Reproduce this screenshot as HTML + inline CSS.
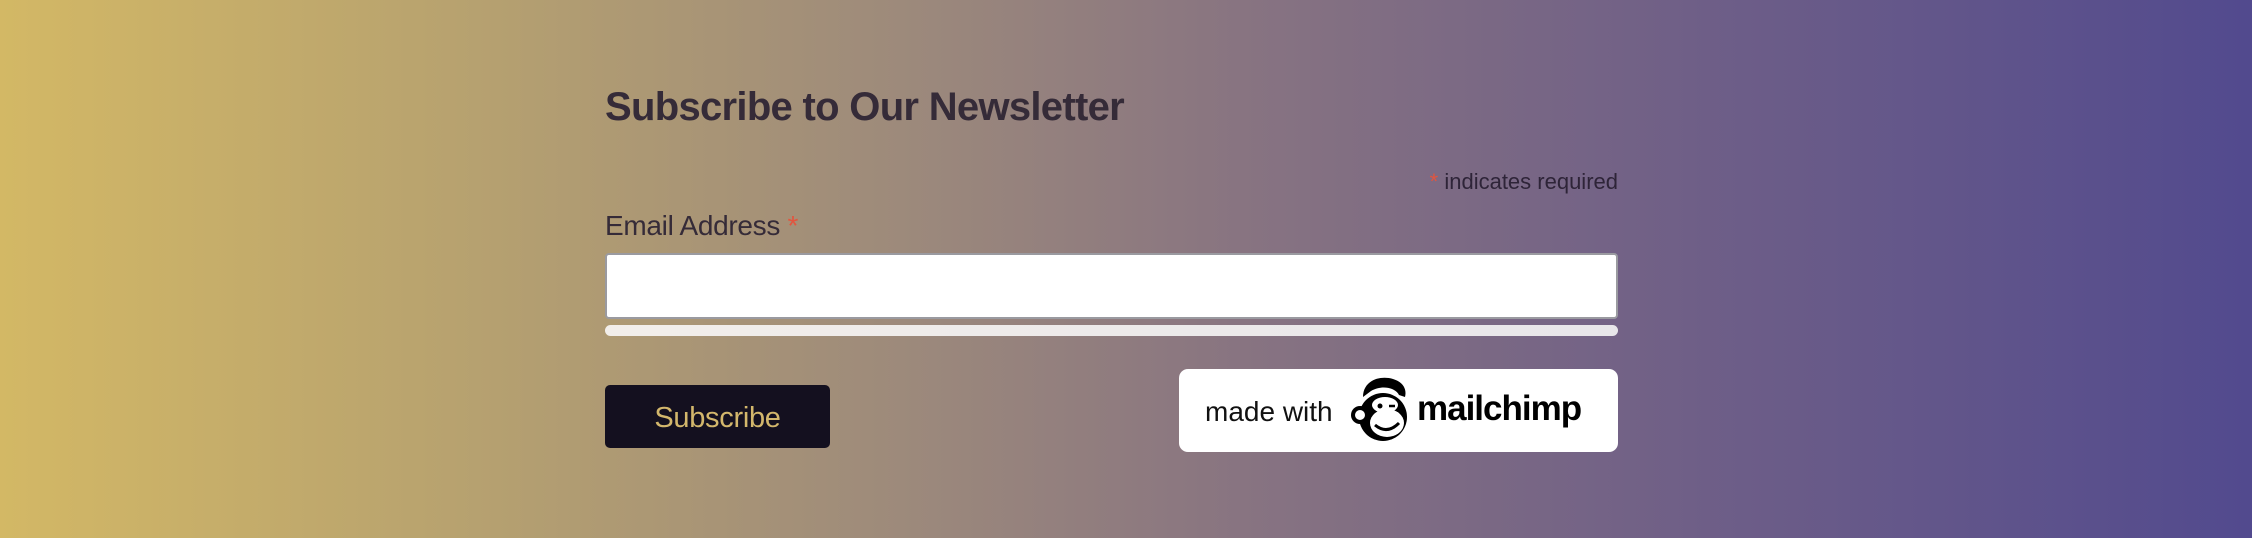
<!DOCTYPE html>
<html><head><meta charset="utf-8"><style>
html,body{margin:0;padding:0}
body{width:2252px;height:538px;overflow:hidden;position:relative;font-family:"Liberation Sans",Arial,sans-serif;
background:linear-gradient(to right,#d3b865 0%,#b5a070 22%,#9d8a7b 40%,#887481 55%,#6f5f87 75%,#524a8e 100%);}
.h{position:absolute;left:605px;top:85px;font-size:40px;font-weight:bold;color:#352b38;margin:0;letter-spacing:-0.7px}
.req{position:absolute;right:634px;top:169px;font-size:22px;color:#2e2438}
.req span,.lab span{color:#e2553f}
.lab{position:absolute;left:605px;top:210px;font-size:28px;color:#352b38;letter-spacing:-0.3px}
.inp{position:absolute;left:605px;top:253px;width:1009px;height:62px;background:#fff;border:2px solid #9a9aa0;border-radius:4px}
.bar{position:absolute;left:605px;top:325px;width:1013px;height:11px;border-radius:6px;background:linear-gradient(to right,#f2eeea,#e8e6ea)}
.btn{position:absolute;left:605px;top:385px;width:225px;height:63px;background:#14101f;border-radius:5px;color:#d3b76c;font-size:29px;text-align:center;line-height:66px;letter-spacing:-0.3px}
.badge{position:absolute;left:1179px;top:369px;width:439px;height:83px;background:#fff;border-radius:9px}
.mw{position:absolute;left:26px;top:27px;font-size:28px;color:#111}
.mc{position:absolute;left:238px;top:20px;font-size:35px;font-weight:bold;color:#000;letter-spacing:-1px}
</style></head><body>
<h2 class="h">Subscribe to Our Newsletter</h2>
<div class="req"><span>*</span> indicates required</div>
<div class="lab">Email Address <span>*</span></div>
<div class="inp"></div>
<div class="bar"></div>
<div class="btn">Subscribe</div>
<div class="badge">
<div class="mw">made with</div>
<svg style="position:absolute;left:170px;top:4px" width="66" height="72" viewBox="0 0 66 72">
<path d="M14 24 C14 8 30 2 44 6 C54 9 58 16 56 24 L50 22 C46 14 32 12 22 18 Z" fill="#000"/>
<ellipse cx="34" cy="44" rx="24" ry="24" fill="#000"/>
<circle cx="11" cy="42" r="9" fill="#000"/>
<circle cx="11" cy="42" r="5" fill="#fff"/>
<ellipse cx="38" cy="50" rx="17" ry="14" fill="#fff"/>
<ellipse cx="36" cy="32" rx="13" ry="8" fill="#fff"/>
<path d="M26 52 Q38 62 50 50" stroke="#000" stroke-width="3" fill="none"/>
<circle cx="31" cy="33" r="2.5" fill="#000"/><path d="M40 33 h6" stroke="#000" stroke-width="2.5"/>
</svg>
<div class="mc">mailchimp</div>
</div>
</body></html>
